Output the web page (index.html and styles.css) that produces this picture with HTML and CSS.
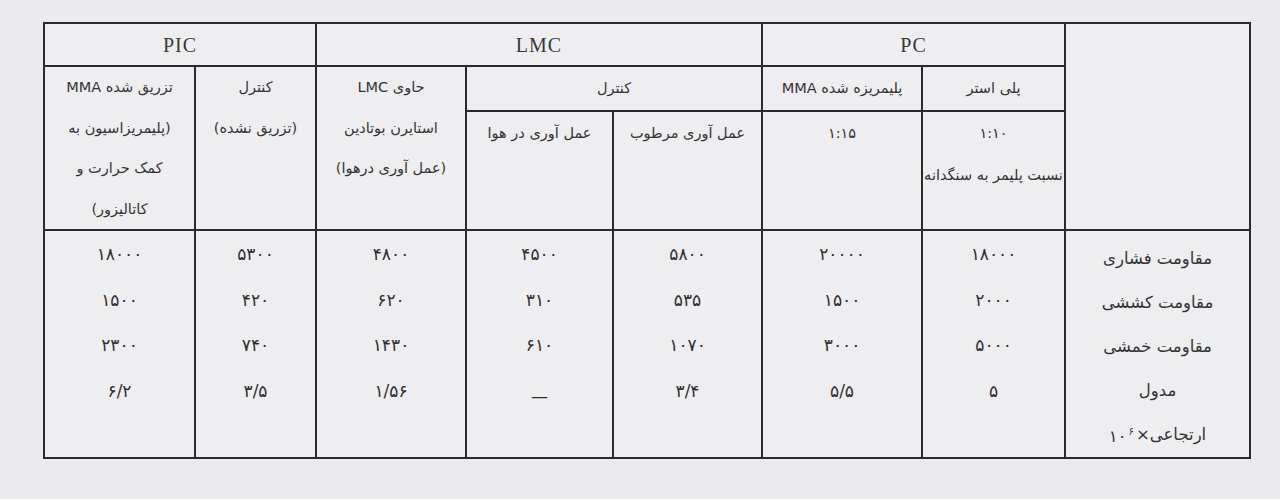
FILE: index.html
```html
<!DOCTYPE html>
<html lang="fa">
<head>
<meta charset="utf-8">
<title>جدول مقایسه</title>
<link rel="stylesheet" href="styles.css">
</head>
<body>
<div class="sheet">
  <table class="grid" dir="rtl">
    <colgroup>
      <col class="c-label">
      <col class="c-pc-pe">
      <col class="c-pc-mma">
      <col class="c-lmc-wet">
      <col class="c-lmc-air">
      <col class="c-lmc-sb">
      <col class="c-pic-ctl">
      <col class="c-pic-mma">
    </colgroup>
    <tr class="r1">
      <td class="blank" rowspan="3"></td>
      <td class="grp" colspan="2">PC</td>
      <td class="grp" colspan="3">LMC</td>
      <td class="grp" colspan="2">PIC</td>
    </tr>
    <tr class="r2">
      <td class="hd">پلی استر</td>
      <td class="hd">پلیمریزه شده MMA</td>
      <td class="hd" colspan="2">کنترل</td>
      <td class="hd tall" rowspan="2">حاوی LMC<br>استایرن بوتادین<br>(عمل آوری درهوا)</td>
      <td class="hd tall" rowspan="2">کنترل<br>(تزریق نشده)</td>
      <td class="hd tall" rowspan="2">تزریق شده MMA<br>(پلیمریزاسیون به<br>کمک حرارت و<br>کاتالیزور)</td>
    </tr>
    <tr class="r3">
      <td class="hd">۱:۱۰<br>نسبت پلیمر به سنگدانه</td>
      <td class="hd">۱:۱۵</td>
      <td class="hd">عمل آوری مرطوب</td>
      <td class="hd">عمل آوری در هوا</td>
    </tr>
    <tr class="r4">
      <td class="lbl">مقاومت فشاری<br>مقاومت کششی<br>مقاومت خمشی<br>مدول<br>ارتجاعی×<span class="pow">۱۰<span class="exp">۶</span></span></td>
      <td class="num">۱۸۰۰۰<br>۲۰۰۰<br>۵۰۰۰<br>۵</td>
      <td class="num">۲۰۰۰۰<br>۱۵۰۰<br>۳۰۰۰<br>۵/۵</td>
      <td class="num">۵۸۰۰<br>۵۳۵<br>۱۰۷۰<br>۳/۴</td>
      <td class="num">۴۵۰۰<br>۳۱۰<br>۶۱۰<br><span class="dash">—</span></td>
      <td class="num">۴۸۰۰<br>۶۲۰<br>۱۴۳۰<br>۱/۵۶</td>
      <td class="num">۵۳۰۰<br>۴۲۰<br>۷۴۰<br>۳/۵</td>
      <td class="num">۱۸۰۰۰<br>۱۵۰۰<br>۲۳۰۰<br>۶/۲</td>
    </tr>
  </table>
</div>
</body>
</html>
```

FILE: styles.css
```css
html, body {
  margin: 0;
  padding: 0;
  background: #ebebed;
}

.sheet {
  padding: 22px 0 0 43px;
}

.grid {
  border-collapse: collapse;
  table-layout: fixed;
  width: 1206px;
  color: #2e2e30;
  font-family: "DejaVu Sans", "Noto Sans", sans-serif;
}

.c-label   { width: 185px; }
.c-pc-pe   { width: 143px; }
.c-pc-mma  { width: 160px; }
.c-lmc-wet { width: 149px; }
.c-lmc-air { width: 147px; }
.c-lmc-sb  { width: 150px; }
.c-pic-ctl { width: 121px; }
.c-pic-mma { width: 151px; }

.grid td {
  border: 2px solid #2a2a2c;
  padding: 0;
  text-align: center;
  vertical-align: top;
  background: #eeeef0;
}

.r1 { height: 43px; }
.r2 { height: 42px; }
.r3 { height: 118px; }
.r4 { height: 226px; }

.grp {
  font-family: "Liberation Serif", "Times New Roman", serif;
  font-size: 20px;
  line-height: 40px;
  vertical-align: middle !important;
  letter-spacing: 1px;
  color: #38383a;
}

.hd {
  font-size: 14.5px;
  line-height: 42px;
  white-space: nowrap;
  color: #333335;
}

.hd.tall {
  line-height: 40.5px;
}

.lbl {
  font-size: 16.5px;
  line-height: 44px;
  padding-top: 6px !important;
  color: #333335;
}

.pow {
  display: inline-flex;
  direction: ltr;
  align-items: flex-start;
  line-height: 20px;
  vertical-align: -2px;
}

.exp {
  font-size: 10px;
  line-height: 10px;
  padding: 0 2px;
}

.num {
  font-size: 17px;
  line-height: 45.5px;
  padding-top: 1px !important;
  letter-spacing: 3.5px;
}

.dash {
  display: inline-block;
  transform: translateY(5px);
  letter-spacing: 0;
}
```
